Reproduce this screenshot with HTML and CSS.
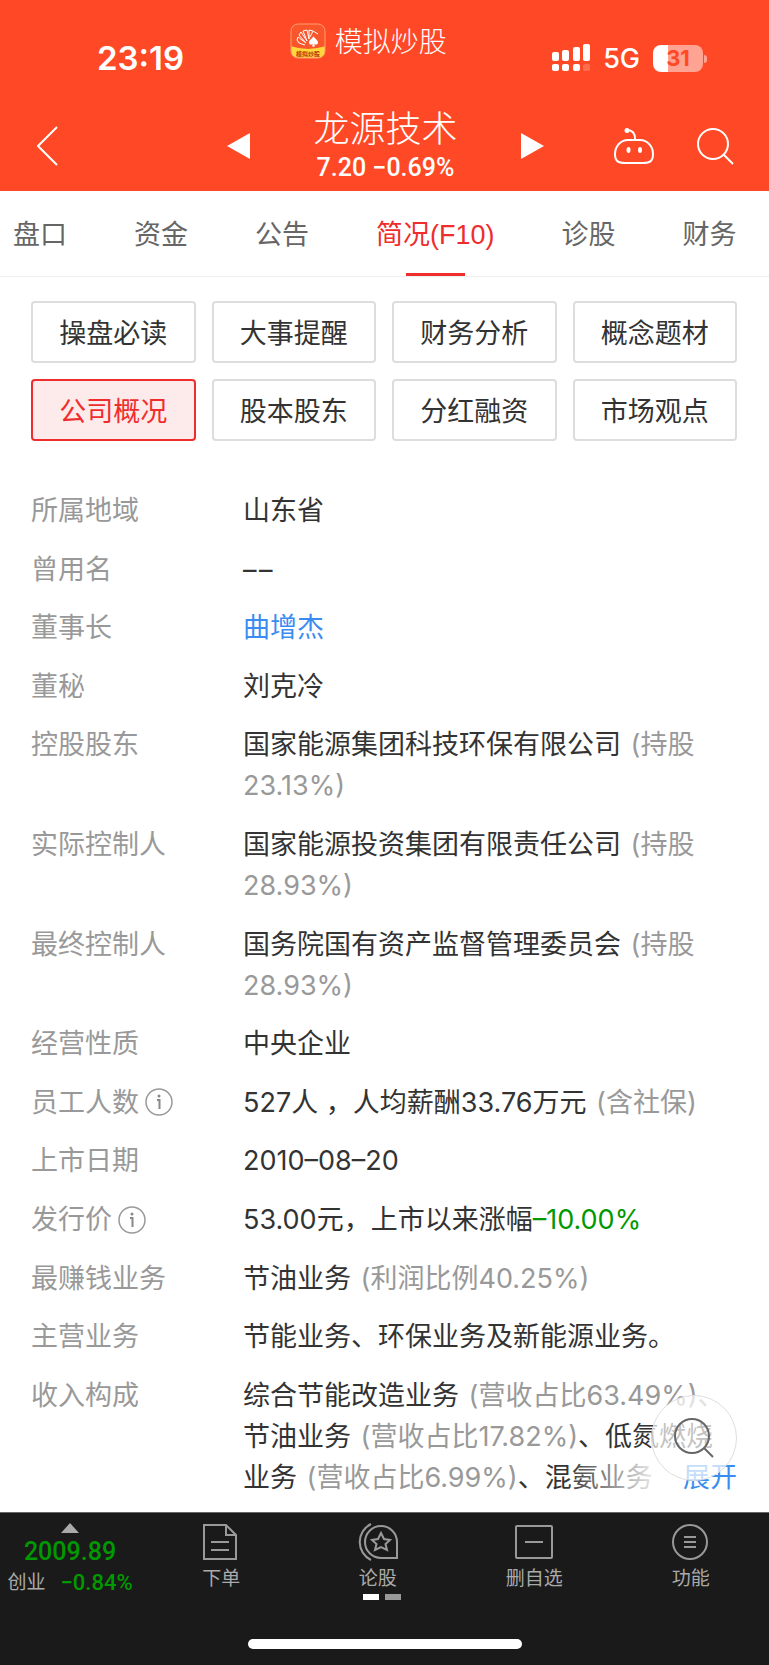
FILE: index.html
```
<!DOCTYPE html>
<html lang="zh-CN">
<head>
    <meta charset="UTF-8">
    <meta name="viewport" content="width=device-width, initial-scale=1.0">
    <title>龙源技术 - 公司概况</title>
    <link rel="stylesheet" href="styles.css">
</head>
<body>
    <header class="header">
        <!-- Status bar -->
        <div class="status-bar">
            <span class="time">23:19</span>
            <div class="app-badge">
                <svg width="36" height="36" viewBox="0 0 36 36">
                    <defs>
                        <clipPath id="badge-clip"><rect x="1" y="1" width="34" height="34" rx="7"/></clipPath>
                    </defs>
                    <g clip-path="url(#badge-clip)">
                        <rect width="36" height="36" fill="#f9562b"/>
                        <path d="M0 23Q18 29 36 23V36H0Z" fill="#ffd83c"/>
                    </g>
                    <rect x="1" y="1" width="34" height="34" rx="7" fill="none" stroke="#ff9c72"/>
                    <path d="M15 22L9 20L7 17L8 14L16 20L9 12L11 9L17 18L13 8L17 7L19 16L19 7L23 8L20 14M23 8L28 11" fill="none" stroke="#fff" stroke-width="1"/>
                    <path d="M23.500 13C24.500 15.500 28 17 28 19.500C28 22 25 22 24 21L25 23.500H22L23 21C22 22 19 22 19 19.500C19 17 22.500 15.500 23.500 13Z" fill="#fff"/>
                    <text x="18" y="33" class="badge-text">模拟炒股</text>
                </svg>
                <span>模拟炒股</span>
            </div>
            <div class="signals">
                <svg width="38" height="28" viewBox="0 0 38 28" fill="#fff">
                    <rect x="0" y="8" width="7" height="9" rx="2"/>
                    <rect x="10" y="6" width="7" height="11" rx="2"/>
                    <rect x="21" y="3" width="7" height="14" rx="2"/>
                    <rect x="31" y="0" width="7" height="17" rx="2"/>
                    <rect x="0" y="20" width="7" height="7" rx="2"/>
                    <rect x="10" y="20" width="7" height="7" rx="2"/>
                    <rect x="21" y="20" width="7" height="7" rx="2"/>
                    <rect x="31" y="20" width="7" height="7" rx="2" opacity="0.2"/>
                </svg>
                <span class="network">5G</span>
                <span class="battery">31</span>
            </div>
        </div>

        <!-- Title with previous / next stock -->
        <nav class="nav-bar">
            <button class="icon-btn back" aria-label="返回">
                <svg width="22" height="40" viewBox="0 0 22 40" fill="none" stroke="#fff" stroke-width="2"><path d="M20 1L1 20L20 39"/></svg>
            </button>
            <div class="stepper">
                <button class="icon-btn" aria-label="上一只">
                    <svg width="23" height="26" viewBox="0 0 23 26" fill="#fff"><path d="M23 0V26L0 13Z"/></svg>
                </button>
                <div class="stock">
                    <h1>龙源技术</h1>
                    <p>7.20 −0.69%</p>
                </div>
                <button class="icon-btn" aria-label="下一只">
                    <svg width="23" height="26" viewBox="0 0 23 26" fill="#fff"><path d="M0 0V26L23 13Z"/></svg>
                </button>
            </div>
            <div class="actions">
                <button class="icon-btn" aria-label="助手">
                    <svg width="40" height="38" viewBox="0 0 40 38" fill="none" stroke="#fff" stroke-width="2">
                        <path d="M14 13H26C34 13 39 20 39 27C39 34 36 36 29 36H11C4 36 1 34 1 27C1 20 6 13 14 13Z"/>
                        <path d="M13 3C18 3 21 6 21 12"/>
                        <circle cx="13" cy="3.500" r="2.500" fill="#fff" stroke="none"/>
                        <ellipse cx="14.500" cy="23" rx="2" ry="3" fill="#fff" stroke="none"/>
                        <ellipse cx="26" cy="23" rx="2" ry="3" fill="#fff" stroke="none"/>
                    </svg>
                </button>
                <button class="icon-btn" aria-label="搜索">
                    <svg width="37" height="38" viewBox="0 0 37 38" fill="none" stroke="#fff" stroke-width="2">
                        <circle cx="16" cy="17" r="15"/>
                        <path d="M26 27L36 37"/>
                    </svg>
                </button>
            </div>
        </nav>
    </header>

    <nav class="tabs">
        <a href="#">盘口</a>
        <a href="#">资金</a>
        <a href="#">公告</a>
        <a href="#" class="active">简况(F10)</a>
        <a href="#">诊股</a>
        <a href="#">财务</a>
    </nav>

    <main>
        <div class="sections">
            <button>操盘必读</button>
            <button>大事提醒</button>
            <button>财务分析</button>
            <button>概念题材</button>
            <button class="active">公司概况</button>
            <button>股本股东</button>
            <button>分红融资</button>
            <button>市场观点</button>
        </div>

        <!-- Company profile -->
        <dl class="profile">
            <div class="row"><dt>所属地域</dt><dd>山东省</dd></div>
            <div class="row"><dt>曾用名</dt><dd>–&#8202;–</dd></div>
            <div class="row"><dt>董事长</dt><dd><a href="#">曲增杰</a></dd></div>
            <div class="row"><dt>董秘</dt><dd>刘克冷</dd></div>
            <div class="row"><dt>控股股东</dt><dd>国家能源集团科技环保有限公司 <span class="note">(持股23.13%)</span></dd></div>
            <div class="row"><dt>实际控制人</dt><dd>国家能源投资集团有限责任公司 <span class="note">(持股28.93%)</span></dd></div>
            <div class="row"><dt>最终控制人</dt><dd>国务院国有资产监督管理委员会 <span class="note">(持股28.93%)</span></dd></div>
            <div class="row"><dt>经营性质</dt><dd>中央企业</dd></div>
            <div class="row">
                <dt>员工人数
                    <svg class="info" width="28" height="28" viewBox="0 0 28 28"><circle cx="14" cy="14" r="13" fill="none" stroke="#999" stroke-width="1.500"/><path d="M12 12H14.500V21" fill="none" stroke="#888" stroke-width="2"/><circle cx="14" cy="8" r="1.500" fill="#888"/></svg>
                </dt>
                <dd>527人 ，人均薪酬33.76万元 <span class="note">(含社保)</span></dd>
            </div>
            <div class="row"><dt>上市日期</dt><dd>2010–08–20</dd></div>
            <div class="row">
                <dt>发行价
                    <svg class="info" width="28" height="28" viewBox="0 0 28 28"><circle cx="14" cy="14" r="13" fill="none" stroke="#999" stroke-width="1.500"/><path d="M12 12H14.500V21" fill="none" stroke="#888" stroke-width="2"/><circle cx="14" cy="8" r="1.500" fill="#888"/></svg>
                </dt>
                <dd>53.00元，上市以来涨幅<span class="down">–10.00%</span></dd>
            </div>
            <div class="row"><dt>最赚钱业务</dt><dd>节油业务 <span class="note">(利润比例40.25%)</span></dd></div>
            <div class="row"><dt>主营业务</dt><dd>节能业务、环保业务及新能源业务。</dd></div>
            <div class="row">
                <dt>收入构成</dt>
                <dd class="clamped">综合节能改造业务 <span class="note">(营收占比63.49%)、</span><br>节油业务 <span class="note">(营收占比17.82%)</span>、低氮燃烧<br>业务 <span class="note">(营收占比6.99%)</span>、混氨业务 <span class="note">(</span><a href="#" class="expand">展开</a></dd>
            </div>
        </dl>
    </main>

    <button class="float-search" aria-label="搜索">
        <svg width="40" height="40" viewBox="0 0 40 40" fill="none" stroke="#666" stroke-width="2">
            <circle cx="18" cy="18" r="17"/>
            <path d="M30 30L39 39"/>
        </svg>
    </button>

    <footer class="toolbar">
        <div class="tools">
            <a href="#" class="index">
                <svg width="18" height="10" viewBox="0 0 18 10" fill="#aaa"><path d="M9 0L18 10H0Z"/></svg>
                <strong>2009.89</strong>
                <span class="index-row"><span>创业</span><em>−0.84%</em></span>
            </a>
            <a href="#" class="tool">
                <svg width="38" height="38" viewBox="0 0 38 38" fill="none" stroke="#999" stroke-width="2">
                    <path d="M2 2H24L34 12V36H2ZM24 2V12H34M9 19H27M9 27H27"/>
                </svg>
                <span>下单</span>
            </a>
            <a href="#" class="tool">
                <svg width="40" height="38" viewBox="0 0 40 38" fill="none" stroke="#999" stroke-width="2">
                    <path d="M23 3A16 16 0 0 0 23 35H39V19A16 16 0 0 0 23 3Z"/>
                    <path d="M13 1A20 20 0 0 0 13 37"/>
                    <path d="M23 10L26 16L32 17L27.500 21L29 27L23 24L17 27L18.500 21L14 17L20 16Z"/>
                </svg>
                <span>论股</span>
                <span class="pager"><i class="on"></i><i></i></span>
            </a>
            <a href="#" class="tool">
                <svg width="38" height="38" viewBox="0 0 38 38" fill="none" stroke="#999" stroke-width="2">
                    <rect x="1" y="3" width="36" height="32" rx="1"/>
                    <path d="M10 19H28"/>
                </svg>
                <span>删自选</span>
            </a>
            <a href="#" class="tool">
                <svg width="38" height="38" viewBox="0 0 38 38" fill="none" stroke="#999" stroke-width="2">
                    <circle cx="18" cy="19" r="17"/>
                    <path d="M12 14H24M12 19H24M12 24H24"/>
                </svg>
                <span>功能</span>
            </a>
        </div>
        <div class="home-bar"></div>
    </footer>
</body>
</html>
```
FILE: styles.css
```
* {
    box-sizing: border-box;
}
body {
    display: flex;
    flex-direction: column;
    min-height: 100vh;
    margin: 0;
    font-family: 'Inter', 'Noto Sans CJK SC', sans-serif;
    font-size: 27px;
    font-weight: 400;
    color: #333;
    background-color: #fff;
}
h1, p, dl, dd {
    margin: 0;
}
a {
    color: #3b8cf0;
    text-decoration: none;
}
button {
    padding: 0;
    font: inherit;
    color: inherit;
    background: none;
    border: none;
}
svg {
    display: block;
    flex-shrink: 0;
}

/* Header */
.header {
    color: #fff;
    background-color: #ff4926;
}
.status-bar {
    display: flex;
    justify-content: space-between;
    height: 100px;
    padding: 0 66px 0 97px;
}
.time {
    margin-top: 38px;
    font-size: 33px;
    font-weight: 600;
    line-height: 40px;
}
.app-badge {
    display: flex;
    align-items: center;
    gap: 9px;
    height: 36px;
    margin-top: 23px;
    font-family: 'Noto Sans CJK SC', sans-serif;
    font-size: 28px;
    font-weight: 300;
    line-height: 32px;
}
.app-badge span {
    padding-bottom: 2px;
}
.badge-text {
    font-size: 6px;
    font-weight: bold;
    fill: #b5340c;
    text-anchor: middle;
}
.signals {
    display: flex;
    align-items: center;
    height: 28px;
    margin-top: 44px;
}
.network {
    margin: 0 13px;
    font-weight: 500;
}
.battery {
    position: relative;
    width: 50px;
    height: 27px;
    border-radius: 8px;
    font-size: 22px;
    font-weight: 700;
    line-height: 27px;
    text-align: center;
    color: #ff4926;
    background: linear-gradient(to right, #fff 31%, #ffa492 31%);
}
.battery::after {
    content: '';
    position: absolute;
    top: 10px;
    right: -4px;
    width: 3px;
    height: 8px;
    border-radius: 0 3px 3px 0;
    background-color: #ffa492;
}
.nav-bar {
    display: grid;
    grid-template-columns: 1fr 318px 1fr;
    align-items: center;
    height: 91px;
    padding: 0 35px 0 37px;
}
.stepper {
    display: flex;
    align-items: center;
    justify-content: space-between;
}
.stock {
    text-align: center;
}
.stock h1 {
    font-family: 'Noto Sans CJK SC', sans-serif;
    font-size: 36px;
    font-weight: 300;
    line-height: 44px;
}
.stock p {
    font-family: 'Roboto', sans-serif;
    font-size: 25px;
    font-weight: 500;
    line-height: 40px;
}
.actions {
    display: flex;
    justify-content: flex-end;
    gap: 43px;
}

/* Tabs */
.tabs {
    display: flex;
    gap: 67px;
    height: 86px;
    padding-left: 13px;
    overflow: hidden;
    border-bottom: 1px solid #eee;
    font-family: 'Liberation Sans', 'Noto Sans CJK SC', sans-serif;
    line-height: 88px;
    white-space: nowrap;
}
.tabs a {
    position: relative;
    height: 86px;
    color: #666;
}
.tabs .active {
    color: #f02d2d;
}
.tabs .active::after {
    content: '';
    position: absolute;
    bottom: 0;
    left: 25%;
    width: 50%;
    height: 4px;
    background-color: #f02d2d;
}

/* Section buttons */
main {
    display: flex;
    flex: 1;
    flex-direction: column;
    padding: 24px 32px 14px 31px;
}
.sections {
    display: grid;
    grid-template-columns: repeat(4, 1fr);
    gap: 16px;
}
.sections button {
    height: 62px;
    padding-bottom: 2px;
    border: 2px solid #ddd;
    border-radius: 4px;
}
.sections .active {
    color: #f02d2d;
    background-color: #fdeaea;
    border-color: #f02d2d;
}

/* Profile list */
.profile {
    display: flex;
    flex: 1;
    flex-direction: column;
    justify-content: space-between;
    margin-top: 49px;
}
.row {
    display: grid;
    grid-template-columns: 212px 1fr;
    line-height: 41px;
}
dt {
    display: flex;
    align-items: center;
    align-self: start;
    gap: 6px;
    color: #999;
}
.note {
    margin-left: 2px;
    color: #999;
}
.down {
    color: #090;
}
.clamped {
    position: relative;
    white-space: nowrap;
}
.expand {
    position: absolute;
    right: 0;
    bottom: 0;
    padding-left: 118px;
    background: linear-gradient(to right, rgba(255, 255, 255, 0), #fff 100px);
}

/* Floating search */
.float-search {
    position: fixed;
    right: 32px;
    bottom: 184px;
    display: flex;
    align-items: center;
    justify-content: center;
    width: 86px;
    height: 86px;
    border: 1px solid #ddd;
    border-radius: 50%;
    background-color: rgba(255, 255, 255, 0.7);
}

/* Bottom toolbar */
.toolbar {
    height: 153px;
    padding-top: 10px;
    border-top: 1px solid #666;
    background-color: #1a1a1a;
}
.tools {
    display: grid;
    grid-template-columns: 143px repeat(4, 1fr);
    height: 116px;
    font-size: 19px;
}
.tool, .index {
    display: flex;
    flex-direction: column;
    align-items: center;
    color: #aaa;
}
.tool span {
    line-height: 36px;
}
.tool .pager {
    display: flex;
    gap: 6px;
    margin: -3px 0 0 8px;
}
.pager i {
    width: 16px;
    height: 6px;
    background-color: #999;
}
.pager .on {
    background-color: #fff;
}
.index {
    padding-right: 3px;
}
.index strong {
    font-family: 'Roboto', sans-serif;
    font-size: 25px;
    font-weight: 500;
    line-height: 38px;
    color: #090;
}
.index-row {
    display: flex;
    gap: 15px;
    line-height: 24px;
}
.index em {
    font-family: 'Roboto', sans-serif;
    font-size: 22px;
    font-style: normal;
    font-weight: 500;
    color: #090;
}
.home-bar {
    width: 274px;
    height: 10px;
    margin: 0 auto;
    border-radius: 5px;
    background-color: #fff;
}
```
